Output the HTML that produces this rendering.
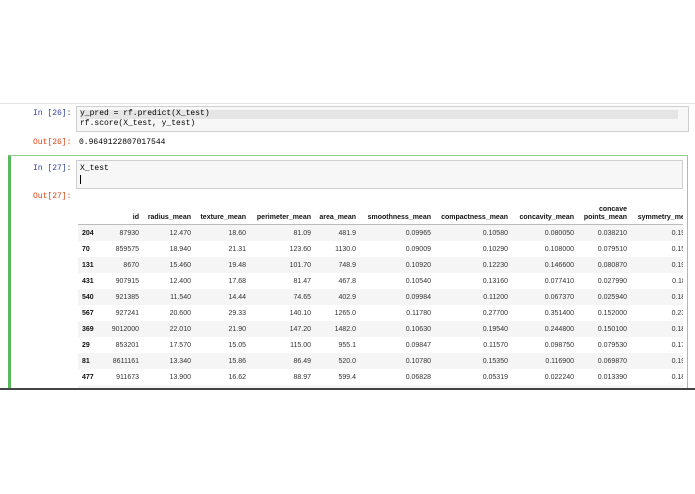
<!DOCTYPE html><html><head><style>
body{margin:0;width:695px;height:494px;background:#fff;position:relative;overflow:hidden;font-family:"Liberation Sans",sans-serif}
.mono{font-family:"Liberation Mono",monospace;font-size:8px;position:absolute}
.p{color:#303f9f}.o{color:#d84315}
table{border-collapse:collapse;font-size:7px;color:#333;table-layout:fixed}
td,th{padding:0 4px 0 0;text-align:right;height:16px;white-space:nowrap;overflow:hidden}
th{font-weight:bold;color:#111}
tbody tr:nth-child(odd){background:#f5f5f5}
tbody th{text-align:left;padding-left:4px}
thead th{vertical-align:bottom;height:22px;border-bottom:1px solid #bbb;line-height:8px;padding-bottom:2px}
</style></head><body>
<div style="position:absolute;left:0;top:103px;width:695px;height:1px;background:#e6e6e6"></div>
<div class="mono p" style="left:33px;top:109px">In [26]:</div>
<div style="position:absolute;left:76px;top:106px;width:611px;height:24px;background:#f7f7f7;border:1px solid #cfcfcf"></div>
<div style="position:absolute;left:80px;top:110px;width:598px;height:9px;background:#e5e5e5"></div>
<div class="mono" style="left:80px;top:109px;line-height:10px">y_pred = rf.predict(X_test)<br>rf.score(X_test, y_test)</div>
<div class="mono o" style="left:33px;top:138px">Out[26]:</div>
<div class="mono" style="left:79px;top:138px">0.9649122807017544</div>
<div style="position:absolute;left:8px;top:155px;width:676px;height:234px;border:1px solid #8fcf8f;border-left:3px solid #5cb85c;border-bottom:none"></div>
<div class="mono p" style="left:33px;top:164px">In [27]:</div>
<div style="position:absolute;left:76px;top:160px;width:605px;height:27px;background:#f7f7f7;border:1px solid #cfcfcf"></div>
<div class="mono" style="left:80px;top:164px">X_test</div>
<div style="position:absolute;left:80px;top:175px;width:1px;height:9px;background:#000"></div>
<div class="mono o" style="left:33px;top:192px">Out[27]:</div>
<div style="position:absolute;left:78px;top:200px;width:605px;height:189px;overflow:hidden">
<table style="width:619px"><colgroup><col style="width:32px"><col style="width:33px"><col style="width:52px"><col style="width:55px"><col style="width:65px"><col style="width:45px"><col style="width:75px"><col style="width:77px"><col style="width:66px"><col style="width:53px"><col style="width:66px"></colgroup>
<thead><tr><th></th><th>id</th><th>radius_mean</th><th>texture_mean</th><th>perimeter_mean</th><th>area_mean</th><th>smoothness_mean</th><th>compactness_mean</th><th>concavity_mean</th><th>concave<br>points_mean</th><th>symmetry_mean</th></tr></thead>
<tbody>
<tr><th>204</th><td>87930</td><td>12.470</td><td>18.60</td><td>81.09</td><td>481.9</td><td>0.09965</td><td>0.10580</td><td>0.080050</td><td>0.038210</td><td>0.1925</td></tr>
<tr><th>70</th><td>859575</td><td>18.940</td><td>21.31</td><td>123.60</td><td>1130.0</td><td>0.09009</td><td>0.10290</td><td>0.108000</td><td>0.079510</td><td>0.1582</td></tr>
<tr><th>131</th><td>8670</td><td>15.460</td><td>19.48</td><td>101.70</td><td>748.9</td><td>0.10920</td><td>0.12230</td><td>0.146600</td><td>0.080870</td><td>0.1931</td></tr>
<tr><th>431</th><td>907915</td><td>12.400</td><td>17.68</td><td>81.47</td><td>467.8</td><td>0.10540</td><td>0.13160</td><td>0.077410</td><td>0.027990</td><td>0.1811</td></tr>
<tr><th>540</th><td>921385</td><td>11.540</td><td>14.44</td><td>74.65</td><td>402.9</td><td>0.09984</td><td>0.11200</td><td>0.067370</td><td>0.025940</td><td>0.1818</td></tr>
<tr><th>567</th><td>927241</td><td>20.600</td><td>29.33</td><td>140.10</td><td>1265.0</td><td>0.11780</td><td>0.27700</td><td>0.351400</td><td>0.152000</td><td>0.2397</td></tr>
<tr><th>369</th><td>9012000</td><td>22.010</td><td>21.90</td><td>147.20</td><td>1482.0</td><td>0.10630</td><td>0.19540</td><td>0.244800</td><td>0.150100</td><td>0.1824</td></tr>
<tr><th>29</th><td>853201</td><td>17.570</td><td>15.05</td><td>115.00</td><td>955.1</td><td>0.09847</td><td>0.11570</td><td>0.098750</td><td>0.079530</td><td>0.1739</td></tr>
<tr><th>81</th><td>8611161</td><td>13.340</td><td>15.86</td><td>86.49</td><td>520.0</td><td>0.10780</td><td>0.15350</td><td>0.116900</td><td>0.069870</td><td>0.1942</td></tr>
<tr><th>477</th><td>911673</td><td>13.900</td><td>16.62</td><td>88.97</td><td>599.4</td><td>0.06828</td><td>0.05319</td><td>0.022240</td><td>0.013390</td><td>0.1813</td></tr>
<tr><th>457</th><td>8110057</td><td>13.210</td><td>25.25</td><td>84.10</td><td>537.9</td><td>0.08791</td><td>0.05205</td><td>0.027720</td><td>0.020680</td><td>0.1619</td></tr>
</tbody></table></div>
<div style="position:absolute;left:0;top:388px;width:695px;height:2px;background:#444"></div>
</body></html>
